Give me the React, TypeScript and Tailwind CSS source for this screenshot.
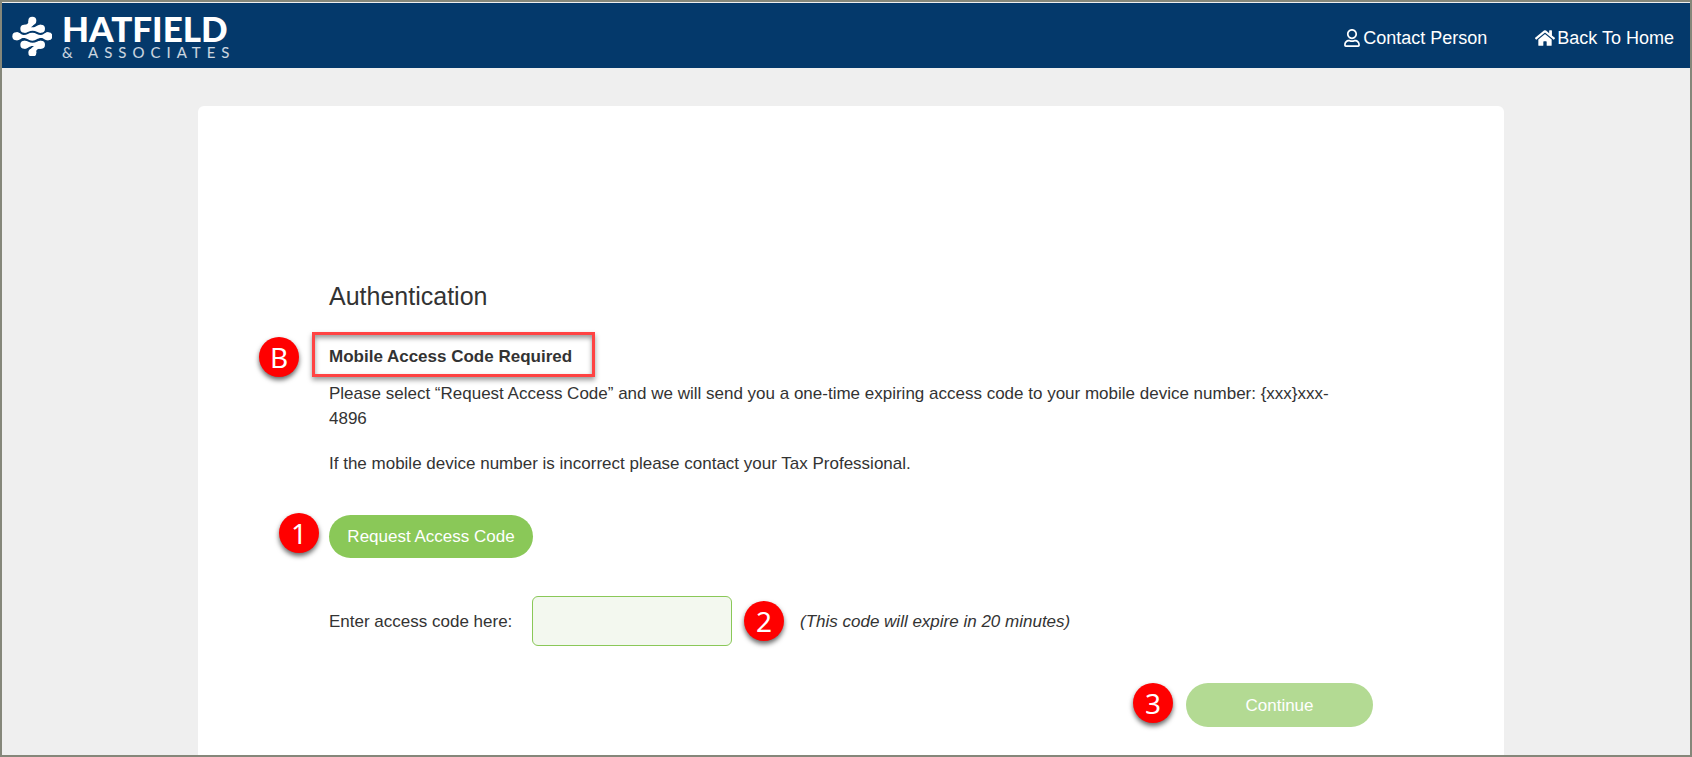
import { useState } from 'react';
import { FaHome, FaRegUser } from 'react-icons/fa';

const logoDots = [
    [61, 14],
    [37, 38],
    [87, 38],
    [13, 61],
    [109, 61],
    [37, 86],
    [87, 86],
    [61, 110],
];

function Logo() {
    return (
        <a href="#" className="flex items-center gap-[10px] text-white">
            <svg width="40" height="40" viewBox="0 0 120 120" fill="currentColor" aria-hidden="true">
                {logoDots.map(([x, y]) => (
                    <circle key={`${x}-${y}`} cx={x} cy={y} r="12" />
                ))}
                {/* tapered links between the dots */}
                <path d="M49 14C51 22 45 26 34 27L46 45C51 36 60 33 68 23Z" />
                <path d="M73 110C71 102 77 98 90 97L78 79C73 88 62 91 54 101Z" />
                <path d="M37 26C49 26 52 34 62 34C72 34 75 26 87 26V50C77 50 72 44 62 44C52 44 47 50 37 50Z" />
                <path d="M37 98C49 98 52 90 62 90C72 90 75 98 87 98V74C77 74 72 80 62 80C52 80 47 74 37 74Z" />
                <path d="M13 49C25 49 26 57 35 57C45 57 50 50 61 50C72 50 77 57 87 57C96 57 97 49 109 49V73C97 73 96 66 87 66C77 66 72 74 61 74C50 74 45 66 35 66C26 66 25 73 13 73Z" />
            </svg>
            <span className="flex flex-col gap-0.5 pt-0.5 font-['Lato',sans-serif]">
                <span className="text-[35px] leading-7 font-black">HATFIELD</span>
                <span className="text-[15px] leading-4 tracking-[6px] text-white/80">&amp; ASSOCIATES</span>
            </span>
        </a>
    );
}

function Marker({ label }: { label: string }) {
    return (
        <span className="flex size-10 shrink-0 items-center justify-center rounded-full bg-[#ff0000] font-['Noto_Sans',sans-serif] text-[28px] leading-9 text-white shadow-[0_3px_5px_rgba(0,0,0,0.6)]">
            {label}
        </span>
    );
}

export default function App() {
    const [code, setCode] = useState('');

    return (
        <div className="flex min-h-screen flex-col border-2 border-[#85877a] bg-[#efefef] font-['Liberation_Sans',Arial,sans-serif] text-[17px] leading-[25px] text-[#333333]">
            <header className="flex h-[66px] items-center justify-between border-t border-[#efefef] bg-[#04396b] pr-4 pl-[10px]">
                <Logo />
                <nav className="flex items-center gap-12 pt-1 text-lg text-white">
                    <a href="#" className="flex items-center gap-0.5">
                        <FaRegUser size={18} />
                        Contact Person
                    </a>
                    <a href="#" className="flex items-center gap-0.5">
                        <FaHome size={20} />
                        Back To Home
                    </a>
                </nav>
            </header>

            <main className="mt-[38px] mr-[186px] ml-[196px] flex grow flex-col rounded-t-md bg-white px-[131px] pt-[174px] pb-7">
                <h1 className="text-[25px] leading-8">Authentication</h1>

                <div className="relative mt-8">
                    <h2 className="font-bold">Mobile Access Code Required</h2>
                    <div className="absolute -top-3 -left-[17px] h-[45px] w-[283px] border-3 border-[#ff4343] shadow-[0_3px_5px_rgba(0,0,0,0.4),inset_0_3px_5px_rgba(0,0,0,0.4)]" />
                    <div className="absolute -top-[7px] -left-[70px]">
                        <Marker label="B" />
                    </div>
                </div>

                <p className="mt-3 pr-3">
                    Please select “Request Access Code” and we will send you a one-time expiring access code to your mobile device number: &#123;xxx&#125;xxx-4896
                </p>
                <p className="mt-5 pr-3">If the mobile device number is incorrect please contact your Tax Professional.</p>

                <div className="relative mt-[39px] self-start">
                    <button type="button" className="h-[43px] w-[204px] rounded-full bg-[#8ac858] text-white">
                        Request Access Code
                    </button>
                    <div className="absolute -top-0.5 -left-[50px]">
                        <Marker label="1" />
                    </div>
                </div>

                <div className="mt-[38px] flex items-center">
                    <label htmlFor="access-code" className="w-[203px]">
                        Enter access code here:
                    </label>
                    <input
                        id="access-code"
                        type="text"
                        value={code}
                        onChange={(e) => setCode(e.target.value)}
                        className="h-[50px] w-[200px] rounded-md border border-[#8ac858] bg-[#f3f8ef] px-3"
                    />
                    <div className="ml-3 flex items-center gap-4">
                        <Marker label="2" />
                        <em>(This code will expire in 20 minutes)</em>
                    </div>
                </div>

                <div className="relative mt-[37px] self-end">
                    <button type="button" className="h-11 w-[187px] rounded-full bg-[#b3da93] text-white">
                        Continue
                    </button>
                    <div className="absolute top-0 -left-[53px]">
                        <Marker label="3" />
                    </div>
                </div>
            </main>
        </div>
    );
}
